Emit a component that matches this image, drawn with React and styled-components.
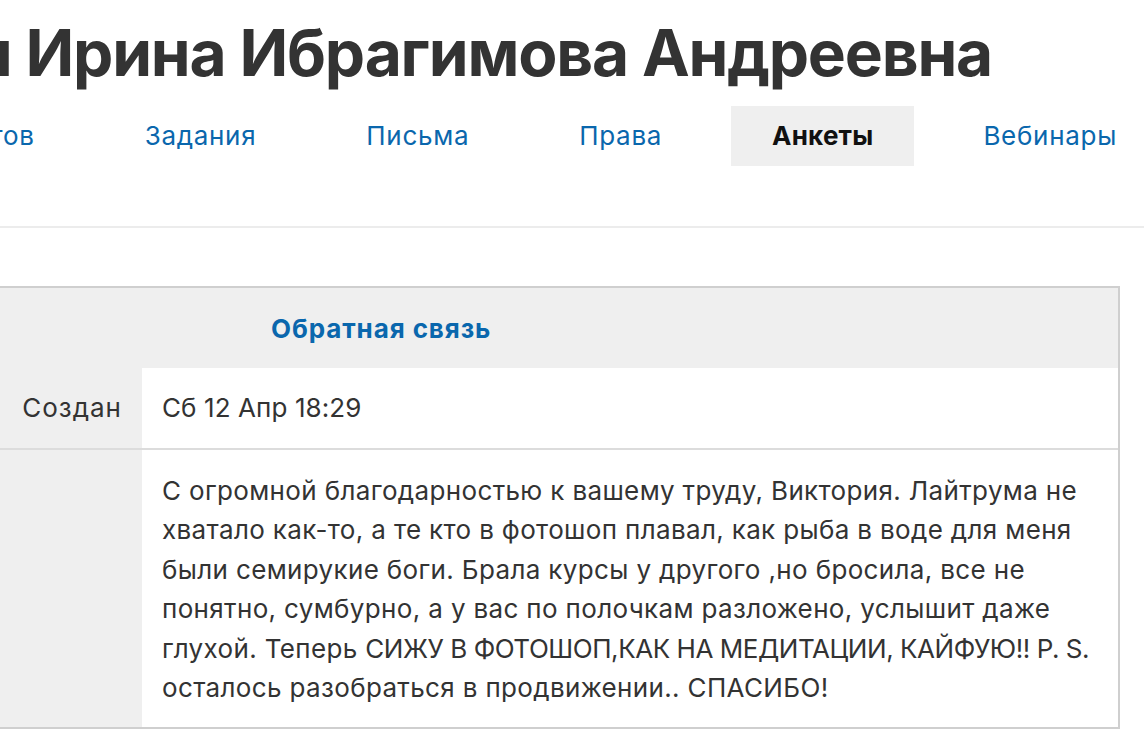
import React from 'react'
import styled, {createGlobalStyle} from "styled-components"

const Global = createGlobalStyle`
  html, body {
    margin: 0;
    padding: 0;
    background: #fff;
    overflow: hidden;
  }
  body {
    font-family: Inter, "Noto Sans", sans-serif;
    color: #333;
  }
`

const Page = styled.div`
  width: 1144px;
  height: 744px;
  overflow: hidden;
`

const TitleBar = styled.div`
  display: flex;
  justify-content: flex-end;
  width: 992px;
  padding-top: 14px;
`

const Title = styled.h1`
  margin: 0;
  white-space: nowrap;
  font-size: 64px;
  line-height: 77px;
  font-weight: 700;
  color: #333;
  letter-spacing: -1.2px;
`

const Nav = styled.nav`
  display: flex;
  justify-content: flex-end;
  gap: 28px;
  width: 1158px;
  margin-top: 15px;
`

const NavItem = styled.a`
  display: block;
  height: 60px;
  line-height: 60px;
  padding: 0 41px;
  white-space: nowrap;
  font-size: 26px;
  text-decoration: none;
  letter-spacing: ${p => p.active ? "0.2px" : "0.7px"};
  color: ${p => p.active ? "#111" : "#0a67ad"};
  font-weight: ${p => p.active ? 700 : 400};
  background: ${p => p.active ? "#efefef" : "transparent"};
`

const Divider = styled.div`
  height: 2px;
  background: #ececec;
  margin-top: 60px;
`

const Table = styled.div`
  margin-top: 58px;
  margin-left: -2px;
  width: 1118px;
  border: 2px solid #cfcfcf;
`

const HeadRow = styled.div`
  height: 80px;
  display: flex;
  align-items: center;
  padding-left: 271px;
  background: #efefef;
  font-size: 26px;
  font-weight: 700;
  letter-spacing: 0.9px;
  color: #0a67ad;
`

const Row = styled.div`
  display: flex;
  border-top: ${p => p.divided ? "2px solid #dcdcdc" : "none"};
`

const Label = styled.div`
  width: 142px;
  flex: none;
  box-sizing: border-box;
  padding: 0 20px;
  background: #efefef;
  text-align: right;
  font-size: 26px;
  line-height: 80px;
  letter-spacing: 1px;
  color: #333;
`

const Value = styled.div`
  flex: 1;
  overflow: hidden;
  white-space: ${p => p.long ? "nowrap" : "normal"};
  padding: ${p => p.long ? "21px 20px 20px" : "0 20px"};
  font-size: 26px;
  line-height: ${p => p.long ? "39.4px" : "80px"};
  letter-spacing: ${p => p.long ? "0.35px" : "0.1px"};
  color: #333;
`

const Caps = styled.span`
  letter-spacing: -0.45px;
`

const App = () => {
  const tabs = ["Ответов", "Задания", "Письма", "Права", "Анкеты", "Вебинары"]

  return (
    <Page>
      <Global/>
      <TitleBar>
        <Title>Анкеты пользователя Ирина Ибрагимова Андреевна</Title>
      </TitleBar>
      <Nav>
        {tabs.map(t => (
          <NavItem key={t} href="#" active={t === "Анкеты"}>{t}</NavItem>
        ))}
      </Nav>
      <Divider/>
      <Table>
        <HeadRow>Обратная связь</HeadRow>
        <Row>
          <Label>Создан</Label>
          <Value>Сб 12 Апр 18:29</Value>
        </Row>
        <Row divided>
          <Label/>
          <Value long>
            С огромной благодарностью к вашему труду, Виктория. Лайтрума не<br/>
            хватало как-то, а те кто в фотошоп плавал, как рыба в воде для меня<br/>
            были семирукие боги. Брала курсы у другого ,но бросила, все не<br/>
            понятно, сумбурно, а у вас по полочкам разложено, услышит даже<br/>
            глухой. Теперь <Caps>СИЖУ В ФОТОШОП,КАК НА МЕДИТАЦИИ, КАЙФУЮ!! P. S.</Caps><br/>
            осталось разобраться в продвижении.. СПАСИБО!
          </Value>
        </Row>
      </Table>
    </Page>
  )
}

export default App
